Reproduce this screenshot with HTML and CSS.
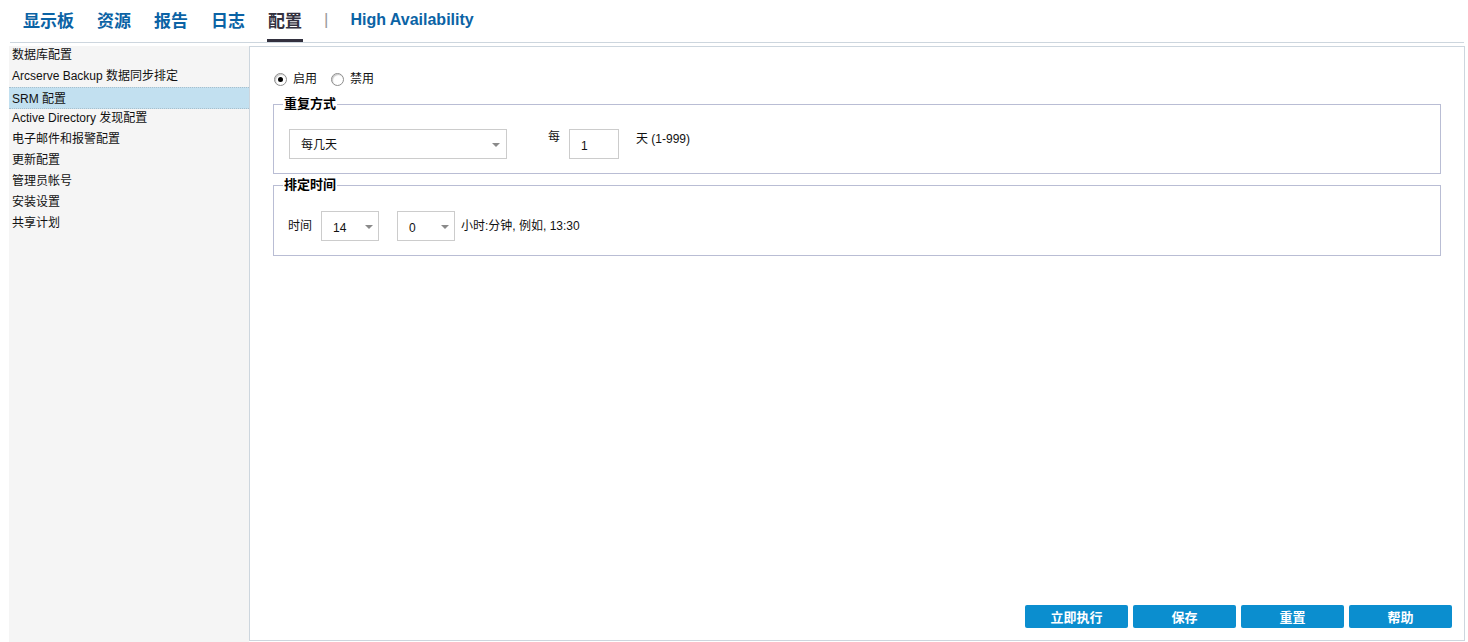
FILE: index.html
```html
<!DOCTYPE html>
<html lang="zh-CN">
<head>
<meta charset="utf-8">
<title>配置</title>
<link rel="stylesheet" href="styles.css">
</head>
<body>
<header class="topnav">
  <a class="tab">显示板</a>
  <a class="tab">资源</a>
  <a class="tab">报告</a>
  <a class="tab">日志</a>
  <a class="tab active">配置</a>
  <span class="tab sep">|</span>
  <a class="tab ha">High Availability</a>
</header>
<div class="layout">
  <nav class="sidebar">
    <div class="item">数据库配置</div>
    <div class="item">Arcserve Backup 数据同步排定</div>
    <div class="item selected">SRM 配置</div>
    <div class="item">Active Directory 发现配置</div>
    <div class="item">电子邮件和报警配置</div>
    <div class="item">更新配置</div>
    <div class="item">管理员帐号</div>
    <div class="item">安装设置</div>
    <div class="item">共享计划</div>
  </nav>
  <main class="panel">
    <div class="radios">
      <label class="radio-opt"><span class="radio checked"></span>启用</label>
      <label class="radio-opt"><span class="radio"></span>禁用</label>
    </div>
    <fieldset class="group g1">
      <legend>重复方式</legend>
      <div class="row">
        <div class="select wide"><span class="val">每几天</span><span class="arrow"></span></div>
        <span class="lbl-every">每</span>
        <div class="input">1</div>
        <span class="lbl-days">天 (1-999)</span>
      </div>
    </fieldset>
    <fieldset class="group g2">
      <legend>排定时间</legend>
      <div class="row time">
        <span class="lbl-time">时间</span>
        <div class="select small"><span class="val">14</span><span class="arrow"></span></div>
        <div class="select small"><span class="val">0</span><span class="arrow"></span></div>
        <span class="lbl-hint">小时:分钟, 例如, 13:30</span>
      </div>
    </fieldset>
    <div class="buttons">
      <button class="btn">立即执行</button>
      <button class="btn">保存</button>
      <button class="btn">重置</button>
      <button class="btn">帮助</button>
    </div>
  </main>
</div>
</body>
</html>
```
FILE: styles.css
```css
html, body {
  margin: 0;
  padding: 0;
  background: #fff;
  width: 1468px;
  height: 642px;
  overflow: hidden;
}
body {
  font-family: "Liberation Sans", "Noto Sans CJK SC", sans-serif;
  font-size: 12px;
  color: #111;
}
.topnav {
  display: flex;
  align-items: flex-start;
  gap: 21px;
  margin-left: 10px;
  width: 1442px;
  padding-left: 12px;
  height: 42px;
  border-bottom: 1px solid #cdd6de;
}
.tab {
  position: relative;
  display: block;
  height: 42px;
  line-height: 40px;
  padding: 0 1px;
  font-size: 17px;
  font-weight: bold;
  color: #0b63a5;
  font-family: "Noto Sans CJK SC", "Liberation Sans", sans-serif;
}
.tab.active {
  color: #33313f;
}
.tab.active::after {
  content: "";
  position: absolute;
  left: 0;
  right: 0;
  bottom: 0;
  height: 3px;
  background: #33313f;
}
.tab.sep {
  color: #9a9a9a;
  font-weight: normal;
  font-family: "Liberation Sans", sans-serif;
  padding: 0;
}
.tab.ha {
  font-family: "Liberation Sans", sans-serif;
  font-size: 16px;
}
.layout {
  display: flex;
  margin-top: 3px;
  margin-left: 9px;
  height: 596px;
}
.sidebar {
  width: 240px;
  background: #f5f5f5;
  height: 596px;
}
.item {
  height: 21px;
  box-sizing: border-box;
  line-height: 17px;
  padding: 1px 3px 3px;
  white-space: nowrap;
  color: #111;
}
.item.selected {
  margin-top: -1px;
  height: 22px;
  padding: 3px 3px 0;
  background: #c2e0f0;
  border-top: 1px dotted #a9bfcc;
  border-bottom: 1px dotted #a9bfcc;
  line-height: 16px;
}
.panel {
  box-sizing: border-box;
  width: 1216px;
  height: 595px;
  border: 1px solid #cdd6de;
  display: flex;
  flex-direction: column;
  padding: 25px 23px 12px 23px;
}
.radios {
  display: flex;
  align-items: center;
  height: 14px;
  gap: 14px;
  margin-bottom: 11px;
  padding-left: 1px;
}
.radio-opt {
  display: flex;
  align-items: center;
  gap: 6px;
  line-height: 14px;
}
.radio {
  width: 11px;
  height: 11px;
  border-radius: 50%;
  border: 1px solid #8d8d8d;
  background: #fff;
  box-shadow: inset 1px 1px 1px #c8c8c8;
  position: relative;
}
.radio.checked::after {
  content: "";
  position: absolute;
  left: 3px;
  top: 3px;
  width: 5px;
  height: 5px;
  border-radius: 50%;
  background: #000;
}
.group {
  margin: 0;
  border: 1px solid #b9bdd4;
  min-width: 0;
}
.group legend {
  font-weight: bold;
  font-size: 13px;
  line-height: 14px;
  padding: 0 1px;
  color: #000;
}
.g1 {
  padding: 18px 15px 14px 15px;
}
.g1 legend {
  margin-left: -6px;
}
.g2 {
  margin-top: 4px;
  padding: 19px 14px 14px 14px;
}
.g2 legend {
  margin-left: -5px;
}
.row {
  display: flex;
  align-items: flex-start;
}
.select {
  box-sizing: border-box;
  height: 30px;
  border: 1px solid #cccccc;
  background: #fff;
  display: flex;
  align-items: center;
  justify-content: space-between;
}
.select .val {
  padding-top: 2px;
  line-height: 14px;
}
.select.wide {
  width: 218px;
  padding: 0 6px 0 11px;
}
.arrow {
  width: 0;
  height: 0;
  border-left: 4px solid transparent;
  border-right: 4px solid transparent;
  border-top: 4px solid #8a8a8a;
  margin-top: 1px;
}
.select.small {
  width: 58px;
  padding: 0 5px 0 11px;
}
.select.small .val {
  padding-top: 4px;
}
.lbl-every {
  margin-left: 41px;
  margin-right: 9px;
  line-height: 14px;
  margin-top: 1px;
}
.input {
  box-sizing: border-box;
  width: 50px;
  height: 30px;
  border: 1px solid #cccccc;
  padding: 9px 0 0 11px;
  line-height: 14px;
}
.lbl-days {
  margin-left: 17px;
  line-height: 14px;
  margin-top: 3px;
}
.row.time {
  align-items: center;
}
.lbl-time {
  margin-right: 9px;
  line-height: 14px;
}
.select.small + .select.small {
  margin-left: 18px;
}
.lbl-hint {
  margin-left: 6px;
  line-height: 14px;
  margin-top: -1px;
}
.buttons {
  margin-top: auto;
  display: flex;
  justify-content: flex-end;
  gap: 5px;
  margin-right: -11px;
}
.btn {
  width: 103px;
  height: 23px;
  border: none;
  border-radius: 2px;
  background: #0b8ecf;
  color: #fff;
  font-family: "Noto Sans CJK SC", "Liberation Sans", sans-serif;
  font-weight: bold;
  font-size: 13px;
  line-height: 23px;
  padding: 0;
}
```
